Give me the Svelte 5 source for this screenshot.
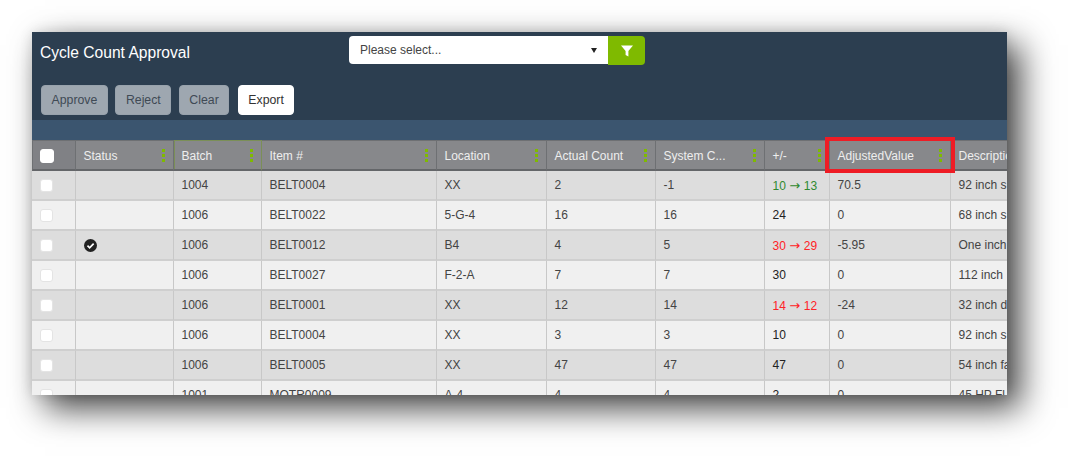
<script lang="ts">
	type Row = {
		status?: boolean;
		batch: string;
		item: string;
		location: string;
		actual: string;
		system: string;
		delta: string;
		deltaTo?: string;
		tone?: 'up' | 'down';
		adjusted: string;
		description: string;
	};

	const columns = [
		{ label: 'Status' },
		{ label: 'Batch', sorted: true },
		{ label: 'Item #' },
		{ label: 'Location' },
		{ label: 'Actual Count' },
		{ label: 'System C...' },
		{ label: '+/-' },
		{ label: 'AdjustedValue', marked: true },
		{ label: 'Description', bare: true }
	];

	const rows: Row[] = [
		{ batch: '1004', item: 'BELT0004', location: 'XX', actual: '2', system: '-1', delta: '10', deltaTo: '13', tone: 'up', adjusted: '70.5', description: '92 inch s' },
		{ batch: '1006', item: 'BELT0022', location: '5-G-4', actual: '16', system: '16', delta: '24', adjusted: '0', description: '68 inch s' },
		{ status: true, batch: '1006', item: 'BELT0012', location: 'B4', actual: '4', system: '5', delta: '30', deltaTo: '29', tone: 'down', adjusted: '-5.95', description: 'One inch' },
		{ batch: '1006', item: 'BELT0027', location: 'F-2-A', actual: '7', system: '7', delta: '30', adjusted: '0', description: '112 inch' },
		{ batch: '1006', item: 'BELT0001', location: 'XX', actual: '12', system: '14', delta: '14', deltaTo: '12', tone: 'down', adjusted: '-24', description: '32 inch d' },
		{ batch: '1006', item: 'BELT0004', location: 'XX', actual: '3', system: '3', delta: '10', adjusted: '0', description: '92 inch s' },
		{ batch: '1006', item: 'BELT0005', location: 'XX', actual: '47', system: '47', delta: '47', adjusted: '0', description: '54 inch fa' },
		{ batch: '1001', item: 'MOTR0009', location: 'A-4', actual: '4', system: '4', delta: '2', adjusted: '0', description: '45 HP Fl' }
	];
</script>

<div class="page">
	<div class="window">
		<header class="top">
			<div class="title-row">
				<h1>Cycle Count Approval</h1>
				<div class="picker">
					<div class="select">
						<span>Please select...</span>
						<i class="caret"></i>
					</div>
					<button class="filter" aria-label="Filter">
						<svg viewBox="0 0 14 14" aria-hidden="true">
							<path d="M1 1.5h12L8.4 7v5.6L5.6 11V7Z" fill="currentColor" />
						</svg>
					</button>
				</div>
			</div>
			<div class="actions">
				<button class="btn" disabled>Approve</button>
				<button class="btn" disabled>Reject</button>
				<button class="btn" disabled>Clear</button>
				<button class="btn btn--on">Export</button>
			</div>
		</header>
		<div class="band"></div>
		<table>
			<colgroup>
				<col style="width: 44px" />
				<col style="width: 98px" />
				<col style="width: 88px" />
				<col style="width: 175px" />
				<col style="width: 110px" />
				<col style="width: 109px" />
				<col style="width: 109px" />
				<col style="width: 65px" />
				<col style="width: 121px" />
				<col style="width: 120px" />
			</colgroup>
			<thead>
				<tr>
					<th class="check"><span class="box box--head"></span></th>
					{#each columns as col}
						<th class:sorted={col.sorted} class:marked={col.marked}>
							<span class="label">{col.label}</span>
							{#if !col.bare}<i class="grip"></i>{/if}
						</th>
					{/each}
				</tr>
			</thead>
			<tbody>
				{#each rows as row}
					<tr>
						<td class="check"><span class="box"></span></td>
						<td>
							{#if row.status}
								<svg class="tick" viewBox="0 0 12 12" aria-hidden="true">
									<circle cx="6" cy="6" r="6" fill="#222" />
									<path d="M3.2 6.2 5.2 8.1 8.9 4.3" fill="none" stroke="#fff" stroke-width="1.6" />
								</svg>
							{/if}
						</td>
						<td>{row.batch}</td>
						<td>{row.item}</td>
						<td>{row.location}</td>
						<td>{row.actual}</td>
						<td>{row.system}</td>
						<td class="delta" class:up={row.tone === 'up'} class:down={row.tone === 'down'}>
							{row.delta}{#if row.deltaTo}<span class="arrow">→</span>{row.deltaTo}{/if}
						</td>
						<td>{row.adjusted}</td>
						<td>{row.description}</td>
					</tr>
				{/each}
			</tbody>
		</table>
	</div>
</div>

<style>
	:global(body) {
		background: #fff;
	}

	.page {
		width: 1072px;
		height: 460px;
		box-sizing: border-box;
		padding: 32px 65px 65px 32px;
		overflow: hidden;
		font-family: "Liberation Sans", Arial, sans-serif;
	}

	.window {
		height: 363px;
		overflow: hidden;
		background: #2c3e50;
		box-shadow: 13px 13px 32px rgba(0, 0, 0, 0.75), 0 0 12px rgba(0, 0, 0, 0.12);
	}

	.top {
		height: 88px;
		box-sizing: border-box;
		padding-top: 4px;
	}

	.title-row {
		display: flex;
		align-items: center;
		height: 28px;
	}

	h1 {
		width: 317px;
		margin: 0;
		padding: 5px 0 0 8px;
		box-sizing: border-box;
		color: #fff;
		font-size: 15.6px;
		font-weight: 400;
	}

	.picker {
		display: flex;
		height: 28px;
	}

	.select {
		display: flex;
		align-items: center;
		justify-content: space-between;
		width: 259px;
		box-sizing: border-box;
		padding: 0 11px;
		background: #fff;
		border-radius: 4px 0 0 4px;
		color: #444;
		font-size: 12px;
	}

	.caret {
		width: 0;
		height: 0;
		border-left: 3.5px solid transparent;
		border-right: 3.5px solid transparent;
		border-top: 5px solid #222;
	}

	.filter {
		display: flex;
		align-items: center;
		justify-content: center;
		width: 37px;
		height: 29px;
		padding: 0;
		border: 0;
		border-radius: 0 4px 4px 0;
		background: #7fba00;
		color: #fff;
	}

	.filter svg {
		width: 14px;
		height: 14px;
	}

	.actions {
		display: flex;
		gap: 7.6px;
		margin-top: 21px;
		padding-left: 9px;
	}

	.btn {
		height: 30px;
		padding: 0 9.5px;
		border: 1px solid #98a2ac;
		border-radius: 4px;
		background: #9ea7b0;
		color: #3f4a55;
		font: 12.3px "Liberation Sans", Arial, sans-serif;
	}

	.btn--on {
		margin-left: 1px;
		background: #fff;
		border-color: #fff;
		color: #333;
	}

	.band {
		height: 20px;
		background: #3b556f;
	}

	table {
		width: 1039px;
		table-layout: fixed;
		border-collapse: separate;
		border-spacing: 0;
		font-size: 12px;
		color: #444;
	}

	th {
		position: relative;
		height: 31px;
		box-sizing: border-box;
		padding: 2px 7.5px 0;
		overflow: hidden;
		background: #87888b;
		border-top: 1px solid #6e7073;
		border-right: 1px solid #6e7073;
		border-bottom: 2px solid #646669;
		color: #eee;
		font-weight: 400;
		text-align: left;
		white-space: nowrap;
	}

	th.check {
		padding: 1px 0 0 7px;
		background: #808185;
		border-left: 1px solid #6e7073;
	}

	th.sorted {
		border-top-color: #7b8f57;
		border-right-color: #7b8f57;
		box-shadow: inset 1px 0 0 #7b8f57;
	}

	th.marked {
		overflow: visible;
		z-index: 1;
	}

	th.marked::after {
		content: "";
		position: absolute;
		top: -4px;
		right: -5px;
		bottom: -4px;
		left: -5px;
		border: 4px solid #ee1c25;
	}

	.grip {
		position: absolute;
		top: 8px;
		right: 8px;
		width: 3px;
		height: 3px;
		background: #7fba00;
		box-shadow: 0 5px 0 #7fba00, 0 10px 0 #7fba00;
	}

	td {
		height: 30px;
		box-sizing: border-box;
		padding: 0 7.5px;
		overflow: hidden;
		border-right: 1px solid #c8c8c8;
		border-bottom: 2px solid #cfcfcf;
		background: #f0f0f0;
		white-space: nowrap;
	}

	tbody tr:nth-child(odd) td {
		background: #dddddd;
	}

	td.check {
		padding: 0 0 0 8px;
	}

	.box {
		display: block;
		width: 13px;
		height: 13px;
		box-sizing: border-box;
		background: #fff;
		border: 1px solid #e4e4e4;
		border-radius: 3px;
	}

	.box--head {
		width: 14px;
		height: 14px;
		border-color: #fff;
	}

	.tick {
		display: block;
		width: 13px;
		height: 13px;
	}

	.delta {
		color: #222;
	}

	.arrow {
		margin: 0 3.5px;
		font-family: "DejaVu Sans", sans-serif;
		font-size: 13px;
	}

	.up {
		color: #2f8a2f;
	}

	.delta.down {
		color: #ff2226;
	}
</style>
